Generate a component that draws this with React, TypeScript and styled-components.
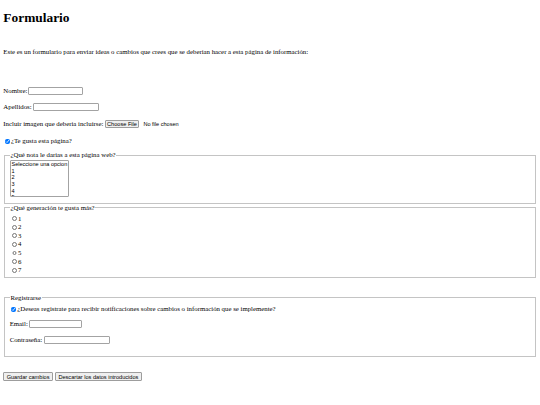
import React from "react";
import styled, { createGlobalStyle } from "styled-components";

const GlobalStyle = createGlobalStyle`
  html, body { margin: 0; padding: 0; background: #ffffff; }
  body {
    font-family: "Liberation Serif", "Times New Roman", serif;
    color: #000000;
  }
`;

const Page = styled.main`
  display: flex;
  flex-direction: column;
  padding: 0 3.33px;
  font-size: 6.8px;
  line-height: 8px;
`;

const Title = styled.h1`
  margin: 10px 0 0;
  font-size: 13.4px;
  line-height: 15px;
  font-weight: bold;
`;

const Intro = styled.p`
  margin: 23px 0 0;
  height: 8px;
`;

const Form = styled.form`
  display: flex;
  flex-direction: column;
`;

const Row = styled.div<{ $mt: number; $h?: number }>`
  display: flex;
  align-items: center;
  height: ${(p) => p.$h ?? 8}px;
  margin-top: ${(p) => p.$mt}px;
  white-space: pre;
`;

const Label = styled.label`
  display: inline-flex;
  align-items: center;
  white-space: pre;
`;

const TextInput = styled.input<{ $w: number }>`
  box-sizing: border-box;
  width: ${(p) => p.$w}px;
  height: 8px;
  margin: 0;
  padding: 0 1px;
  border: 1px solid #a3a3a3;
  border-radius: 1px;
  background: #ffffff;
  font: 5.56px "Liberation Sans", Arial, sans-serif;
  outline: none;
`;

const SysButton = styled.button`
  box-sizing: border-box;
  height: 8.7px;
  margin: 0;
  padding: 0 2.3px;
  border: 1px solid #9d9d9d;
  border-radius: 1px;
  background: #efefef;
  color: #000000;
  font: 5.6px "Liberation Sans", Arial, sans-serif;
  line-height: 6px;
  white-space: nowrap;
`;

const FileButton = styled(SysButton).attrs({ as: "span" })`
  display: inline-flex;
  align-items: center;
  height: 8.3px;
  padding: 0 1px;
`;

const FileStatus = styled.span`
  margin-left: 4.5px;
  font: 5.56px "Liberation Sans", Arial, sans-serif;
`;

const HiddenFile = styled.input`
  display: none;
`;

const Check = styled.input.attrs({ type: "checkbox" })`
  width: 5px;
  height: 5px;
  margin: 0 1.2px 0 1.4px;
  accent-color: #0075ff;
`;

const Radio = styled.input.attrs({ type: "radio" })`
  width: 4.8px;
  height: 4.8px;
  margin: 0 1.3px 0 2.3px;
`;

const Group = styled.fieldset<{ $mt: number; $pt: number; $pb: number }>`
  margin: ${(p) => p.$mt}px 0.83px 0;
  padding: ${(p) => p.$pt}px 4.5px ${(p) => p.$pb}px;
  border: 1px solid #c4c4c4;
  min-width: 0;
`;

const Legend = styled.legend`
  padding: 0 0.8px;
  line-height: 8px;
  font-size: 6.8px;
`;

const Stack = styled.div`
  display: flex;
  flex-direction: column;
  align-items: flex-start;
`;

const ListBox = styled.select`
  box-sizing: border-box;
  width: 59px;
  height: 37px;
  margin: 0;
  padding: 0;
  border: 1px solid #a3a3a3;
  border-radius: 1px;
  background: #ffffff;
  font: 5.56px "Liberation Sans", Arial, sans-serif;
  overflow: hidden;
  outline: none;

  option {
    padding: 0 0.8px;
    min-height: 0;
    height: 6.6px;
    line-height: 6.6px;
    color: #000000;
  }
`;

const RadioRow = styled.label`
  display: flex;
  align-items: center;
  height: 8.6px;
`;

const ButtonBar = styled.div`
  display: flex;
  gap: 2.3px;
  margin-top: 15px;
`;

const notas = ["1", "2", "3", "4", "5"];
const generaciones = ["1", "2", "3", "4", "5", "6", "7"];

export default function App() {
  return (
    <>
      <GlobalStyle />
      <Page>
        <Title>Formulario</Title>
        <Intro>
          Este es un formulario para enviar ideas o cambios que crees que se deberian hacer a esta página de información:
        </Intro>
        <Form onSubmit={(e) => e.preventDefault()}>
          <Row $mt={31}>
            <Label htmlFor="nombre">Nombre:</Label>
            <TextInput id="nombre" type="text" $w={55} />
          </Row>
          <Row $mt={8.3}>
            <Label htmlFor="apellidos">Apellidos: </Label>
            <TextInput id="apellidos" type="text" $w={66} />
          </Row>
          <Row $mt={8.3} $h={8.3}>
            <Label htmlFor="imagen">Incluir imagen que deberia incluirse: </Label>
            <Label>
              <HiddenFile id="imagen" type="file" />
              <FileButton>Choose File</FileButton>
              <FileStatus>No file chosen</FileStatus>
            </Label>
          </Row>
          <Row $mt={9.4}>
            <Label>
              <Check defaultChecked />
              ¿Te gusta esta página?
            </Label>
          </Row>

          <Group $mt={6} $pt={1} $pb={5.5}>
            <Legend>¿Qué nota le darias a esta página web?</Legend>
            <Stack>
              <ListBox size={5}>
                <option value="">Seleccione una opcion</option>
                {notas.map((n) => (
                  <option key={n} value={n}>
                    {n}
                  </option>
                ))}
              </ListBox>
            </Stack>
          </Group>

          <Group $mt={0} $pt={2.5} $pb={2.3}>
            <Legend>¿Qué generación te gusta más?</Legend>
            <Stack>
              {generaciones.map((g) => (
                <RadioRow key={g}>
                  <Radio name="generacion" value={g} />
                  {g}
                </RadioRow>
              ))}
            </Stack>
          </Group>

          <Group $mt={16} $pt={3.5} $pb={12}>
            <Legend>Registrarse</Legend>
            <Stack>
              <Row $mt={0}>
                <Label>
                  <Check defaultChecked />
                  ¿Deseas registrate para recibir notificaciones sobre cambios o información que se implemente?
                </Label>
              </Row>
              <Row $mt={7}>
                <Label htmlFor="email">Email: </Label>
                <TextInput id="email" type="email" $w={53} />
              </Row>
              <Row $mt={8}>
                <Label htmlFor="pass">Contraseña: </Label>
                <TextInput id="pass" type="password" $w={66} />
              </Row>
            </Stack>
          </Group>

          <ButtonBar>
            <SysButton type="submit">Guardar cambios</SysButton>
            <SysButton type="reset">Descartar los datos introducidos</SysButton>
          </ButtonBar>
        </Form>
      </Page>
    </>
  );
}
